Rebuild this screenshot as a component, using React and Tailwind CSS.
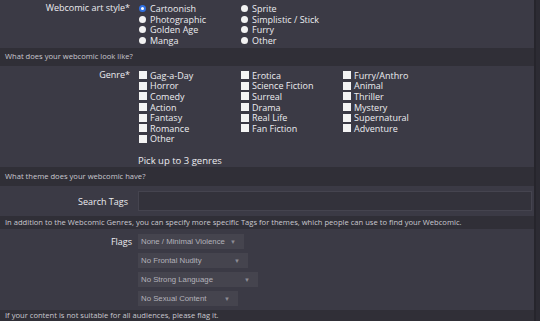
const artStyles = [
  ["Cartoonish", "Sprite"],
  ["Photographic", "Simplistic / Stick"],
  ["Golden Age", "Furry"],
  ["Manga", "Other"],
];

const genreCols = [
  ["Gag-a-Day", "Horror", "Comedy", "Action", "Fantasy", "Romance", "Other"],
  ["Erotica", "Science Fiction", "Surreal", "Drama", "Real Life", "Fan Fiction"],
  ["Furry/Anthro", "Animal", "Thriller", "Mystery", "Supernatural", "Adventure"],
];

const flags = [
  ["None / Minimal Violence", "w-[106px]"],
  ["No Frontal Nudity", "w-[110px]"],
  ["No Strong Language", "w-[120px]"],
  ["No Sexual Content", "w-[100px]"],
];

const Radio = ({ checked }) => (
  <span
    className={
      checked
        ? "w-[7px] h-[7px] rounded-full bg-white border-[2px] border-[#2f6fe0] shrink-0"
        : "w-[7px] h-[7px] rounded-full bg-[#f2f2f2] shrink-0"
    }
  />
);

const Check = () => <span className="w-[8px] h-[8px] bg-[#f4f4f4] shrink-0" />;

const Helper = ({ children, h }) => (
  <div className={`flex items-center px-[5px] bg-[#302f37] text-[7.6px] leading-none text-[#c9c8cf] ${h}`}>
    {children}
  </div>
);

const App = () => {
  return (
    <div
      className="w-[540px] h-[321px] overflow-hidden bg-[#2c2b33] text-[#ececf0]"
      style={{ fontFamily: '"Open Sans", "Noto Sans", sans-serif' }}
    >
      <div className="w-[536px] border-r-[2px] border-[#26252c]">
        {/* Art style */}
        <div className="flex bg-[#3b3a45] h-[48px] pt-[3px]">
          <div className="w-[132px] text-right text-[9px] leading-[10.7px] pr-[2px]">Webcomic art style*</div>
          <div className="ml-[7px] flex">
            {[0, 1].map((c) => (
              <div key={c} className="w-[102px] flex flex-col">
                {artStyles.map((row, i) => (
                  <div key={i} className="flex items-center gap-[4px] h-[10.7px] text-[9px] leading-none">
                    <Radio checked={c === 0 && i === 0} />
                    <span>{row[c]}</span>
                  </div>
                ))}
              </div>
            ))}
          </div>
        </div>
        <Helper h="h-[18px]">What does your webcomic look like?</Helper>

        {/* Genre */}
        <div className="flex bg-[#3b3a45] h-[101px] pt-[4px]">
          <div className="w-[132px] text-right text-[9px] leading-[10.6px] pr-[2px]">Genre*</div>
          <div className="ml-[7px] flex flex-col">
            <div className="flex">
              {genreCols.map((col, c) => (
                <div key={c} className={c === 2 ? "flex flex-col" : "w-[102px] flex flex-col"}>
                  {col.map((g) => (
                    <div key={g} className="flex items-center gap-[3px] h-[10.6px] text-[9px] leading-none">
                      <Check />
                      <span>{g}</span>
                    </div>
                  ))}
                </div>
              ))}
            </div>
            <div className="mt-[11px] -ml-[1px] text-[9.5px] leading-[11px]">Pick up to 3 genres</div>
          </div>
        </div>
        <Helper h="h-[19px]">What theme does your webcomic have?</Helper>

        {/* Search tags */}
        <div className="flex items-center bg-[#3b3a45] h-[30px]">
          <div className="w-[132px] text-right text-[9px] leading-none pr-[4px]">Search Tags</div>
          <div className="ml-[6px] w-[394px] h-[20px] bg-[#33323b] border border-[#45444f]" />
        </div>
        <Helper h="h-[13px]">
          In addition to the Webcomic Genres, you can specify more specific Tags for themes, which people can use to find your Webcomic.
        </Helper>

        {/* Flags */}
        <div className="flex bg-[#3b3a45] h-[81px] pt-[5px]">
          <div className="w-[132px] text-right text-[9px] leading-[15px]">Flags</div>
          <div className="ml-[6px] flex flex-col gap-[4px]">
            {flags.map(([label, w]) => (
              <div
                key={label}
                className={`${w} h-[15px] flex items-center justify-between pl-[3px] pr-[8px] bg-[#45444e] text-[7.8px] leading-none text-[#b3b2ba]`}
                style={{ fontFamily: '"Liberation Sans", Arial, sans-serif' }}
              >
                <span>{label}</span>
                <span className="text-[6px] text-[#8d8c95]">▼</span>
              </div>
            ))}
          </div>
        </div>
        <Helper h="h-[12px]">If your content is not suitable for all audiences, please flag it.</Helper>
      </div>
    </div>
  );
};

export default App;
